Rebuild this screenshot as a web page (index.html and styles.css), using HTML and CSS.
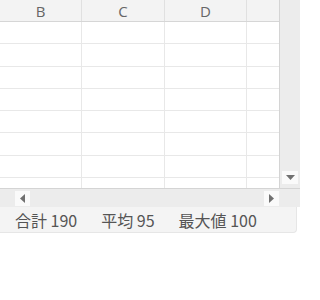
FILE: index.html
```html
<!DOCTYPE html>
<html lang="ja">
<head>
<meta charset="utf-8">
<link rel="stylesheet" href="styles.css">
</head>
<body>
<div class="app">
  <div class="sheet">
    <div class="grid">
      <div class="row head">
        <div class="cell c1">B</div>
        <div class="cell c2">C</div>
        <div class="cell c3">D</div>
        <div class="cell c4"></div>
      </div>
      <div class="row"><div class="cell c1"></div><div class="cell c2"></div><div class="cell c3"></div><div class="cell c4"></div></div>
      <div class="row"><div class="cell c1"></div><div class="cell c2"></div><div class="cell c3"></div><div class="cell c4"></div></div>
      <div class="row"><div class="cell c1"></div><div class="cell c2"></div><div class="cell c3"></div><div class="cell c4"></div></div>
      <div class="row"><div class="cell c1"></div><div class="cell c2"></div><div class="cell c3"></div><div class="cell c4"></div></div>
      <div class="row"><div class="cell c1"></div><div class="cell c2"></div><div class="cell c3"></div><div class="cell c4"></div></div>
      <div class="row"><div class="cell c1"></div><div class="cell c2"></div><div class="cell c3"></div><div class="cell c4"></div></div>
      <div class="row"><div class="cell c1"></div><div class="cell c2"></div><div class="cell c3"></div><div class="cell c4"></div></div>
      <div class="row last"><div class="cell c1"></div><div class="cell c2"></div><div class="cell c3"></div><div class="cell c4"></div></div>
    </div>
    <div class="vscroll">
      <div class="sbtn down"><svg width="9" height="5" viewBox="0 0 9 5"><path d="M0 0H9L4.5 5Z" fill="#707070"/></svg></div>
    </div>
  </div>
  <div class="hscroll">
    <div class="sbtn left"><svg width="5" height="9" viewBox="0 0 5 9"><path d="M5 0V9L0 4.5Z" fill="#707070"/></svg></div>
    <div class="track"></div>
    <div class="sbtn right"><svg width="5" height="9" viewBox="0 0 5 9"><path d="M0 0V9L5 4.5Z" fill="#707070"/></svg></div>
    <div class="corner"></div>
  </div>
  <div class="status">
    <span class="stat">合計 190</span>
    <span class="stat">平均 95</span>
    <span class="stat">最大値 100</span>
  </div>
</div>
</body>
</html>
```
FILE: styles.css
```css
html, body {
  margin: 0;
  padding: 0;
  background: #ffffff;
}
.app {
  width: 300px;
  height: 300px;
  font-family: "Noto Sans CJK JP", "Noto Sans", sans-serif;
  overflow: hidden;
}
.sheet {
  display: flex;
  height: 188px;
}
.grid {
  width: 280px;
  overflow: hidden;
  border-right: 1px solid #d4d4d4;
  box-sizing: border-box;
}
.row {
  display: flex;
  height: 22.3px;
  box-sizing: border-box;
  border-bottom: 1px solid #e8e8e8;
}
.row.head {
  height: 22px;
  background: #f3f3f3;
  border-bottom: 1px solid #d6d6d6;
}
.row.last {
  border-bottom: none;
}
.cell {
  flex: none;
  box-sizing: border-box;
  border-right: 1px solid #e8e8e8;
  display: flex;
  align-items: center;
  justify-content: center;
  color: #666666;
  font-family: "Open Sans", "Noto Sans", sans-serif;
  font-size: 15px;
}
.head .cell {
  border-right-color: #e0e0e0;
}
.c1 { width: 82px; }
.c2 { width: 83px; }
.c3 { width: 82px; }
.c4 { width: 40px; border-right: none; }
.vscroll {
  width: 20px;
  background: #ececec;
  display: flex;
  flex-direction: column;
  justify-content: flex-end;
  align-items: flex-end;
  padding: 0 2px 4px 0;
  box-sizing: border-box;
}
.sbtn {
  background: #fafafa;
  display: flex;
  align-items: center;
  justify-content: center;
  box-sizing: border-box;
}
.down {
  width: 16px;
  height: 13px;
}
.hscroll {
  display: flex;
  align-items: center;
  height: 19px;
  background: #ececec;
  border-top: 1px solid #d4d4d4;
  box-sizing: border-box;
  padding-left: 15px;
}
.left, .right {
  width: 15px;
  height: 15px;
}
.track {
  width: 234px;
}
.corner {
  flex: 1;
}
.status {
  display: flex;
  align-items: center;
  gap: 24px;
  height: 26px;
  padding-left: 15px;
  background: #f4f4f4;
  border-bottom: 1px solid #e6e6e6;
  border-right: 1px solid #e6e6e6;
  border-radius: 0 0 4px 0;
  width: 297px;
  box-sizing: border-box;
}
.stat {
  font-size: 16px;
  color: #555555;
  white-space: nowrap;
}
```
